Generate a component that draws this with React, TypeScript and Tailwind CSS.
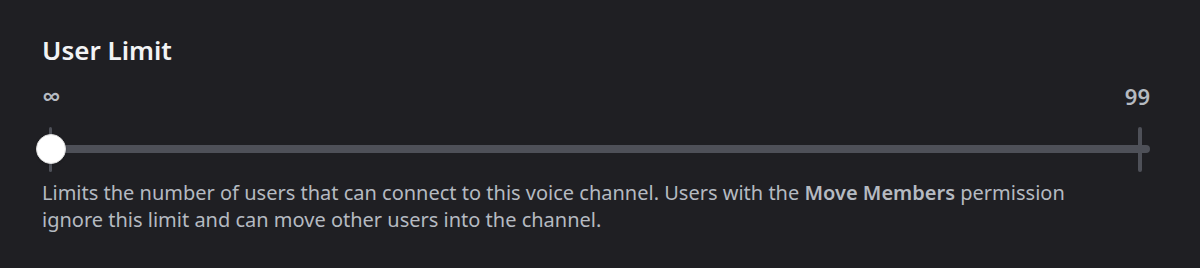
import React from "react";

const font = { fontFamily: '"Noto Sans", "Open Sans", sans-serif' };

const UserLimit = () => {
  return (
    <div className="w-[1200px] h-[268px] bg-[#1f1f23] pl-[42px] pt-[34px]" style={font}>
      <h2 className="text-[26px] leading-[32px] font-semibold text-[#f2f3f5]">User Limit</h2>

      <div className="w-[1108px] mt-[20px]">
        <div className="flex justify-between items-center h-[20px] text-[#b5bac1]">
          <span className="text-[26px] leading-[20px] font-semibold">∞</span>
          <span className="text-[22px] leading-[20px] font-semibold">99</span>
        </div>

        <div className="relative h-[45px] mt-[21px]">
          <div className="absolute inset-x-0 top-[18px] h-[8px] rounded-full bg-[#4e5058]" />
          <div className="flex h-full justify-between pl-[7px] pr-[8px]">
            <div className="w-[3px] h-full rounded-full bg-[#4e5058]" />
            <div className="w-[4px] h-full rounded-full bg-[#4e5058]" />
          </div>
          <div className="absolute left-[-6px] top-[7px] w-[30px] h-[30px] rounded-full bg-white border border-[#dcdcdc] shadow" />
        </div>
      </div>

      <p className="mt-[7px] w-[1040px] text-[20px] leading-[27px] text-[#b5bac1]">
        Limits the number of users that can connect to this voice channel. Users with the{" "}
        <span className="font-semibold">Move Members</span> permission ignore this limit and can move other users into the channel.
      </p>
    </div>
  );
};

export default function App() {
  return <UserLimit />;
}
